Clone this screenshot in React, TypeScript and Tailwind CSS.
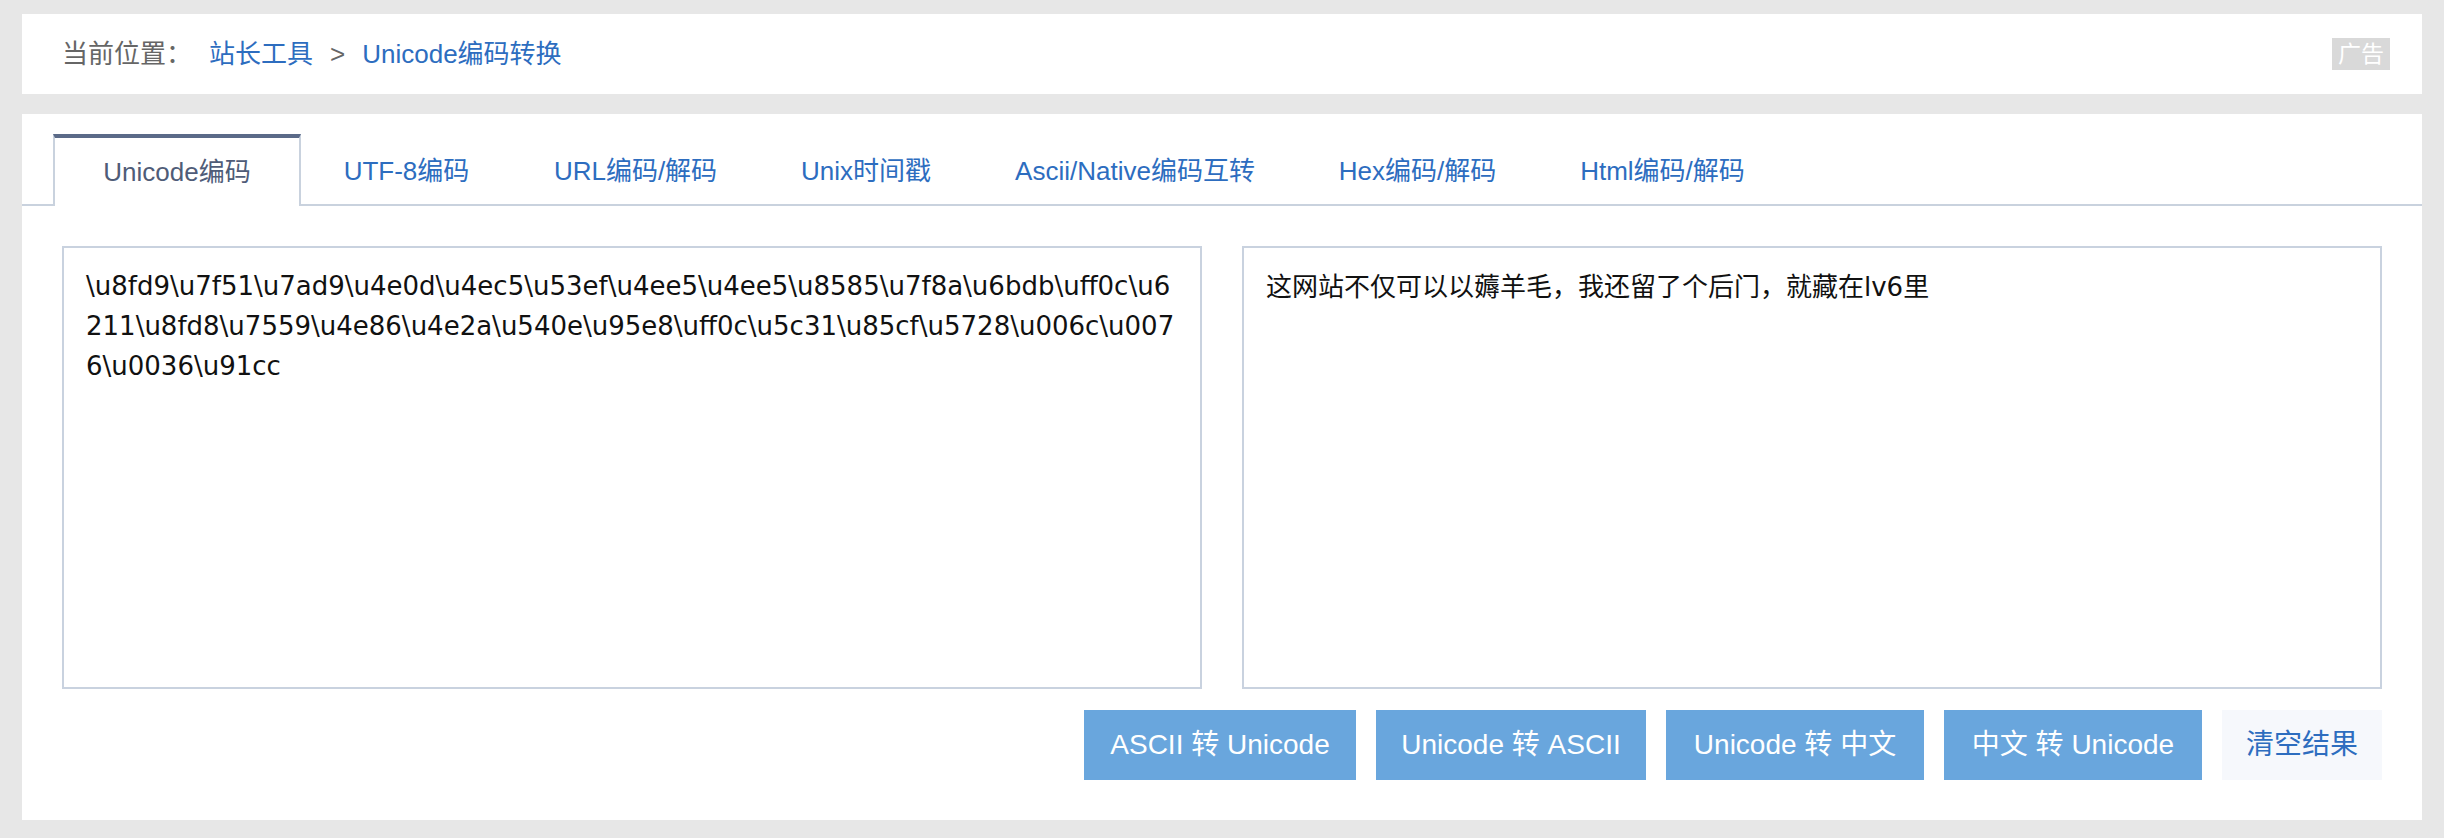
import React from "react";

const tabs = [
  { label: "Unicode编码", w: "w-[248px]", active: true },
  { label: "UTF-8编码", w: "w-[211px]" },
  { label: "URL编码/解码", w: "w-[247px]" },
  { label: "Unix时间戳", w: "w-[214px]" },
  { label: "Ascii/Native编码互转", w: "w-[324px]" },
  { label: "Hex编码/解码", w: "w-[241px]" },
  { label: "Html编码/解码", w: "w-[249px]" },
];

const leftText = [
  "\\u8fd9\\u7f51\\u7ad9\\u4e0d\\u4ec5\\u53ef\\u4ee5\\u4ee5\\u8585\\u7f8a\\u6bdb\\uff0c\\u6",
  "211\\u8fd8\\u7559\\u4e86\\u4e2a\\u540e\\u95e8\\uff0c\\u5c31\\u85cf\\u5728\\u006c\\u007",
  "6\\u0036\\u91cc",
].join("\n");

const rightText = "这网站不仅可以以薅羊毛，我还留了个后门，就藏在lv6里";

const buttons = [
  { label: "ASCII 转 Unicode", w: "w-[272px]" },
  { label: "Unicode 转 ASCII", w: "w-[270px]" },
  { label: "Unicode 转 中文", w: "w-[258px]" },
  { label: "中文 转 Unicode", w: "w-[258px]" },
];

export default function App() {
  return (
    <div className="min-h-[838px] bg-[#e7e7e7] pt-[14px] px-[22px] pb-[18px] [font-family:'Liberation_Sans','Noto_Sans_CJK_SC',sans-serif]">
      {/* breadcrumb bar */}
      <div className="h-[80px] bg-white flex items-center pl-[40px] pr-[32px] text-[26px]">
        <div className="flex items-center gap-[17px]">
          <span className="text-[#666]">当前位置：</span>
          <span className="text-[#2d6dbf]">站长工具</span>
          <span className="text-[#666]">&gt;</span>
          <span className="text-[#2d6dbf]">Unicode编码转换</span>
        </div>
        <div className="ml-auto w-[58px] h-[32px] bg-[#d9d9d9] text-white text-[23px] flex items-center justify-center">
          广告
        </div>
      </div>

      {/* main panel */}
      <div className="mt-[20px] bg-white pt-[20px] pb-[40px]">
        <div className="flex pl-[31px] border-b-2 border-[#c9d2de] text-[26px]">
          {tabs.map((t) =>
            t.active ? (
              <div
                key={t.label}
                className={`${t.w} h-[72px] -mb-[2px] bg-white border-t-4 border-t-[#5b6a88] border-x-2 border-x-[#c9d2de] flex items-center justify-center text-[#4f5c78]`}
              >
                {t.label}
              </div>
            ) : (
              <div
                key={t.label}
                className={`${t.w} h-[70px] pt-[4px] flex items-center justify-center text-[#2d6dbf]`}
              >
                {t.label}
              </div>
            )
          )}
        </div>

        <div className="px-[40px] pt-[40px]">
          <div className="grid grid-cols-2 gap-[40px]">
            <textarea
              readOnly
              wrap="off"
              value={leftText}
              className="h-[443px] resize-none overflow-hidden border-2 border-[#c9d2df] px-[22px] pt-[18px] pb-[14px] text-[26px] leading-[40px] text-[#111] outline-none whitespace-pre [font-family:'DejaVu_Sans','Noto_Sans_CJK_SC',sans-serif]"
            />
            <textarea
              readOnly
              wrap="off"
              value={rightText}
              className="h-[443px] resize-none overflow-hidden border-2 border-[#c9d2df] px-[22px] pt-[19px] pb-[14px] text-[26px] leading-[40px] text-[#111] outline-none whitespace-pre [font-family:'DejaVu_Sans','Noto_Sans_CJK_SC',sans-serif]"
            />
          </div>

          <div className="mt-[21px] flex justify-end gap-[20px] text-[28px]">
            {buttons.map((b) => (
              <button
                key={b.label}
                className={`${b.w} h-[70px] bg-[#69a6dd] text-white flex items-center justify-center`}
              >
                {b.label}
              </button>
            ))}
            <button className="w-[160px] h-[70px] bg-[#f6f8fc] text-[#2d6dbf] flex items-center justify-center">
              清空结果
            </button>
          </div>
        </div>
      </div>
    </div>
  );
}
